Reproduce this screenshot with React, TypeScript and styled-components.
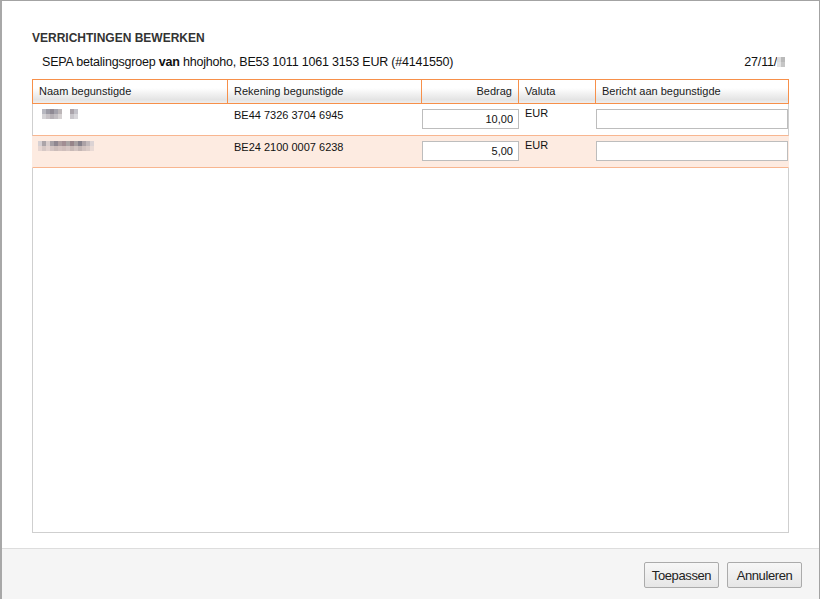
import React from 'react';
import styled, {createGlobalStyle} from 'styled-components';

const GlobalStyle = createGlobalStyle`
    html, body {
        margin: 0;
        padding: 0;
        background: #ffffff;
    }
    body {
        font-family: "Liberation Sans", Arial, sans-serif;
        color: #222;
    }
`;

const Dialog = styled.div`
    width: 817px;
    height: 598px;
    border-top: 1px solid #a3a3a3;
    border-left: 2px solid #a8a8a8;
    border-right: 1px solid #a3a3a3;
    background: #fff;
    display: flex;
    flex-direction: column;
`;

const Body = styled.div`
    flex: 1;
    padding: 29px 30px 15px 30px;
    display: flex;
    flex-direction: column;
`;

const Title = styled.h1`
    margin: 0;
    font-size: 12px;
    font-weight: bold;
    color: #333;
    line-height: 16px;
`;

const InfoRow = styled.div`
    display: flex;
    justify-content: space-between;
    align-items: center;
    margin-top: 8px;
    padding: 0 0 0 10px;
    font-size: 12.5px;
    letter-spacing: -0.2px;
    line-height: 16px;
    color: #111;
`;

const DateText = styled.span`
    display: flex;
    align-items: center;
    margin-right: 4px;
`;

const Table = styled.div`
    margin-top: 9px;
    height: 454px;
    border: 1px solid #cfcfcf;
    border-top: none;
    box-sizing: border-box;
`;

const cols = '195px 194px 97px 77px 1fr';

const HeadRow = styled.div`
    display: grid;
    grid-template-columns: ${cols};
    height: 25px;
    box-sizing: border-box;
    border: 1px solid #f7904a;
    margin: 0 -1px;
    background: linear-gradient(#ffffff 0%, #ffffff 35%, #e4e4e4 85%, #eeeeee 100%);
`;

const HeadCell = styled.div<{$right?: boolean; $last?: boolean}>`
    font-size: 11px;
    line-height: 23px;
    padding: 0 6px;
    color: #1a1a1a;
    text-align: ${(p) => (p.$right ? 'right' : 'left')};
    border-right: ${(p) => (p.$last ? 'none' : '1px solid #f7904a')};
`;

const Row = styled.div<{$alt?: boolean}>`
    display: grid;
    grid-template-columns: ${cols};
    height: 32px;
    box-sizing: border-box;
    background: ${(p) => (p.$alt ? '#fdebe1' : '#ffffff')};
    border-bottom: 1px solid #f8b690;
    margin: 0 -1px;
    border-left: ${(p) => (p.$alt ? '1px solid #fdebe1' : '1px solid #cfcfcf')};
    border-right: ${(p) => (p.$alt ? '1px solid #fdebe1' : '1px solid #cfcfcf')};
`;

const Cell = styled.div<{$pad?: number; $top?: number}>`
    font-size: 11px;
    line-height: 14px;
    padding: ${(p) => p.$top ?? 4}px ${(p) => p.$pad ?? 6}px 0 ${(p) => p.$pad ?? 6}px;
    color: #111;
    overflow: hidden;
`;

const InputCell = styled.div`
    padding: 5px 0 0 0;
`;

const Field = styled.input<{$right?: boolean}>`
    box-sizing: border-box;
    width: 100%;
    height: 20px;
    border: 1px solid #bdbdbd;
    background: #fff;
    font-family: "Liberation Sans", Arial, sans-serif;
    font-size: 11px;
    color: #111;
    padding: 0 5px;
    text-align: ${(p) => (p.$right ? 'right' : 'left')};
    outline: none;
`;

const Footer = styled.div`
    height: 50px;
    border-top: 1px solid #dddddd;
    background: #f5f5f5;
    display: flex;
    justify-content: flex-end;
    align-items: center;
    gap: 8px;
    padding: 0 17px 0 0;
`;

const Button = styled.button`
    height: 26px;
    padding: 0 5px;
    min-width: 75px;
    border: 1px solid #ababab;
    border-radius: 2px;
    background: linear-gradient(#f7f7f7, #e6e6e6);
    font-family: "Liberation Sans", Arial, sans-serif;
    font-size: 13px;
    color: #222;
    letter-spacing: -0.4px;
    margin-top: 2px;
`;

const Blur = ({cells}: {cells: string[][]}) => (
    <svg width={cells[0].length * 4} height={cells.length * 5} style={{display: 'block'}}>
        {cells.map((r, y) =>
            r.map((c, x) => <rect key={x + '-' + y} x={x * 4} y={y * 5} width={4} height={5} fill={c} />)
        )}
    </svg>
);

const name1 = [
    ['#fff', '#b7b8c0', '#9d9ca6', '#8f8a94', '#a4a2ab', '#bcb6b8', '#fff', '#fff', '#aaa4ab', '#c3c2c9', '#fff', '#fff'],
    ['#fff', '#d4d3d6', '#c6c2c6', '#b6b1b6', '#c2bec2', '#d6d2d3', '#fff', '#fff', '#c8c6cb', '#d8d7db', '#fff', '#fff'],
];

const name2 = [
    ['#d6d0d3', '#aba4a8', '#d8cdcc', '#a6a0a5', '#8f8790', '#ad9ea0', '#a28e93', '#aaa4a4', '#978489', '#a79fa0', '#85808a', '#aca2a6', '#c2b9bb', '#dcd3d4', '#fdebe1', '#fdebe1'],
    ['#e6d6d2', '#d6c8c5', '#e3d3cf', '#d4c5c3', '#cbbcb9', '#d4c3c0', '#cfbebb', '#d6c6c3', '#c8b9b6', '#d3c4c1', '#c4b6b4', '#d2c3c0', '#dacbc7', '#e9dad5', '#fdebe1', '#fdebe1'],
];

const dateBlur = [
    ['#dcdcdc', '#b9b9b9'],
    ['#e4e4e4', '#c6c6c6'],
];

export default function App() {
    const rows = [
        {name: name1, iban: 'BE44 7326 3704 6945', amount: '10,00'},
        {name: name2, iban: 'BE24 2100 0007 6238', amount: '5,00'},
    ];
    return (
        <>
            <GlobalStyle />
            <Dialog>
                <Body>
                    <Title>VERRICHTINGEN BEWERKEN</Title>
                    <InfoRow>
                        <span>
                            SEPA betalingsgroep <b>van</b> hhojhoho, BE53 1011 1061 3153 EUR (#4141550)
                        </span>
                        <DateText>
                            27/11/
                            <Blur cells={dateBlur} />
                        </DateText>
                    </InfoRow>
                    <Table>
                        <HeadRow>
                            <HeadCell>Naam begunstigde</HeadCell>
                            <HeadCell>Rekening begunstigde</HeadCell>
                            <HeadCell $right>Bedrag</HeadCell>
                            <HeadCell>Valuta</HeadCell>
                            <HeadCell $last>Bericht aan begunstigde</HeadCell>
                        </HeadRow>
                        {rows.map((r, i) => (
                            <Row key={i} $alt={i % 2 === 1}>
                                <Cell $pad={5} $top={5}>
                                    <Blur cells={r.name} />
                                </Cell>
                                <Cell>{r.iban}</Cell>
                                <InputCell>
                                    <Field $right defaultValue={r.amount} />
                                </InputCell>
                                <Cell $top={2}>EUR</Cell>
                                <InputCell>
                                    <Field defaultValue="" />
                                </InputCell>
                            </Row>
                        ))}
                    </Table>
                </Body>
                <Footer>
                    <Button>Toepassen</Button>
                    <Button>Annuleren</Button>
                </Footer>
            </Dialog>
        </>
    );
}
